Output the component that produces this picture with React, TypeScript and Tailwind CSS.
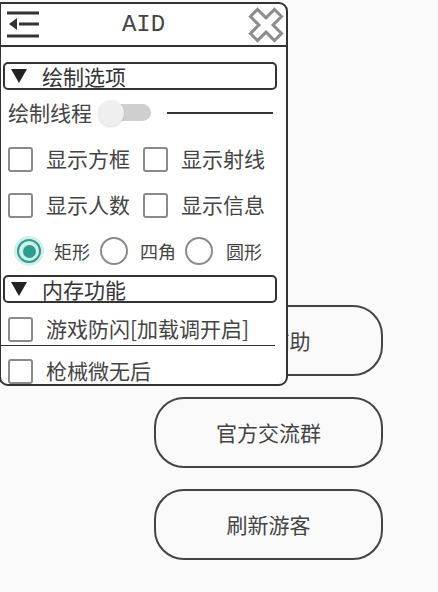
import React from 'react';

const font = { fontFamily: '"Noto Sans CJK SC", "Noto Sans", sans-serif' };

const CheckBox = () => (
  <div className="w-[25px] h-[25px] border-2 border-[#8a8a8a] rounded-[3px] shrink-0" />
);

const Radio = ({ on }: { on?: boolean }) =>
  on ? (
    <div className="w-[30px] h-[30px] rounded-full bg-[#d3efea] flex items-center justify-center shrink-0">
      <div className="w-[24px] h-[24px] rounded-full border-2 border-[#2a9d8f] flex items-center justify-center">
        <div className="w-[13px] h-[13px] rounded-full bg-[#2a9d8f]" />
      </div>
    </div>
  ) : (
    <div className="w-[30px] h-[30px] flex items-center justify-center shrink-0">
      <div className="w-[28px] h-[28px] rounded-full border-2 border-[#8a8a8a]" />
    </div>
  );

const Section = ({ title }: { title: string }) => (
  <div className="mx-[2px] w-[274px] h-[28px] border-2 border-[#333] rounded-[5px] flex items-center pl-[6px] gap-[15px] text-[21px] text-[#333] leading-none">
    <svg width="16" height="14" viewBox="0 0 16 14">
      <polygon points="0,0 16,0 8,14" fill="#222" />
    </svg>
    <span>{title}</span>
  </div>
);

const MenuIcon = () => (
  <svg width="34" height="30" viewBox="0 0 34 30">
    <g stroke="#333" strokeWidth="3">
      <line x1="2" y1="3" x2="34" y2="3" />
      <line x1="14" y1="14" x2="34" y2="14" />
      <line x1="2" y1="26" x2="34" y2="26" />
    </g>
    <polygon points="4,14 12,8 12,20" fill="#333" />
  </svg>
);

const CloseIcon = () => (
  <svg width="36" height="36" viewBox="0 0 36 36">
    <polygon
      points="13,1 23,1 23,13 35,13 35,23 23,23 23,35 13,35 13,23 1,23 1,13 13,13"
      transform="rotate(45 18 18)"
      fill="#fff"
      stroke="#8c8c8c"
      strokeWidth="3"
    />
  </svg>
);

const PillButton = ({ label }: { label: string }) => (
  <div className="w-[229px] h-[71px] border-2 border-[#444] rounded-[30px] flex items-center justify-center text-[21px] text-[#444]">
    {label}
  </div>
);

export default function App() {
  return (
    <div className="relative w-[438px] h-[592px] bg-[#fafafa] overflow-hidden" style={font}>
      {/* buttons behind the floating window */}
      <div className="flex flex-col gap-[21px] pl-[154px] pt-[305px]">
        <PillButton label="开启辅助" />
        <PillButton label="官方交流群" />
        <PillButton label="刷新游客" />
      </div>

      {/* floating window */}
      <div className="absolute left-[-1px] top-[2px] w-[289px] h-[384px] bg-white border-2 border-[#333] rounded-b-[9px] rounded-tr-[9px] overflow-hidden">
        <div className="h-[43px] border-b-2 border-[#333] flex items-center justify-between pl-[4px] pr-[2px]">
          <MenuIcon />
          <span className="text-[24px] text-[#444] leading-none" style={{ fontFamily: '"Liberation Mono", monospace' }}>
            AID
          </span>
          <CloseIcon />
        </div>

        <div className="pt-[15px]">
          <Section title="绘制选项" />

          <div className="flex items-center h-[46px] pl-[7px] text-[21px] text-[#444]">
            <span>绘制线程</span>
            <div className="relative w-[53px] h-[26px] ml-[6px]">
              <div className="absolute left-[12px] top-[4px] w-[41px] h-[17px] rounded-full bg-[#cfcfcf]" />
              <div className="absolute left-0 top-0 w-[26px] h-[26px] rounded-full bg-[#efefef] shadow-[0_1px_2px_rgba(0,0,0,0.15)]" />
            </div>
            <div className="ml-[16px] w-[106px] h-[2px] bg-[#333]" />
          </div>

          <div className="flex flex-col">
            {[
              ['显示方框', '显示射线'],
              ['显示人数', '显示信息'],
            ].map((row, i) => (
              <div key={i} className="flex items-center h-[46px] pl-[7px] text-[21px] text-[#444]">
                <CheckBox />
                <span className="ml-[13px] w-[97px]">{row[0]}</span>
                <CheckBox />
                <span className="ml-[13px]">{row[1]}</span>
              </div>
            ))}
          </div>

          <div className="flex items-center h-[46px] pl-[13px] text-[18px] text-[#444]">
            <Radio on />
            <span className="ml-[10px] mr-[9px]">矩形</span>
            <Radio />
            <span className="ml-[11px] mr-[8px]">四角</span>
            <Radio />
            <span className="ml-[12px]">圆形</span>
          </div>

          <div className="pt-[1px]">
            <Section title="内存功能" />
          </div>

          <div className="flex items-center h-[42px] mt-[5px] pl-[7px] text-[21px] text-[#444]">
            <CheckBox />
            <span className="ml-[13px]">游戏防闪[加载调开启]</span>
          </div>
          <div className="mt-[-5px] h-[1px] w-[274px] bg-[#333]" />
          <div className="flex items-center h-[42px] mt-[4px] pl-[7px] text-[21px] text-[#444]">
            <CheckBox />
            <span className="ml-[13px]">枪械微无后</span>
          </div>
        </div>
      </div>
    </div>
  );
}
